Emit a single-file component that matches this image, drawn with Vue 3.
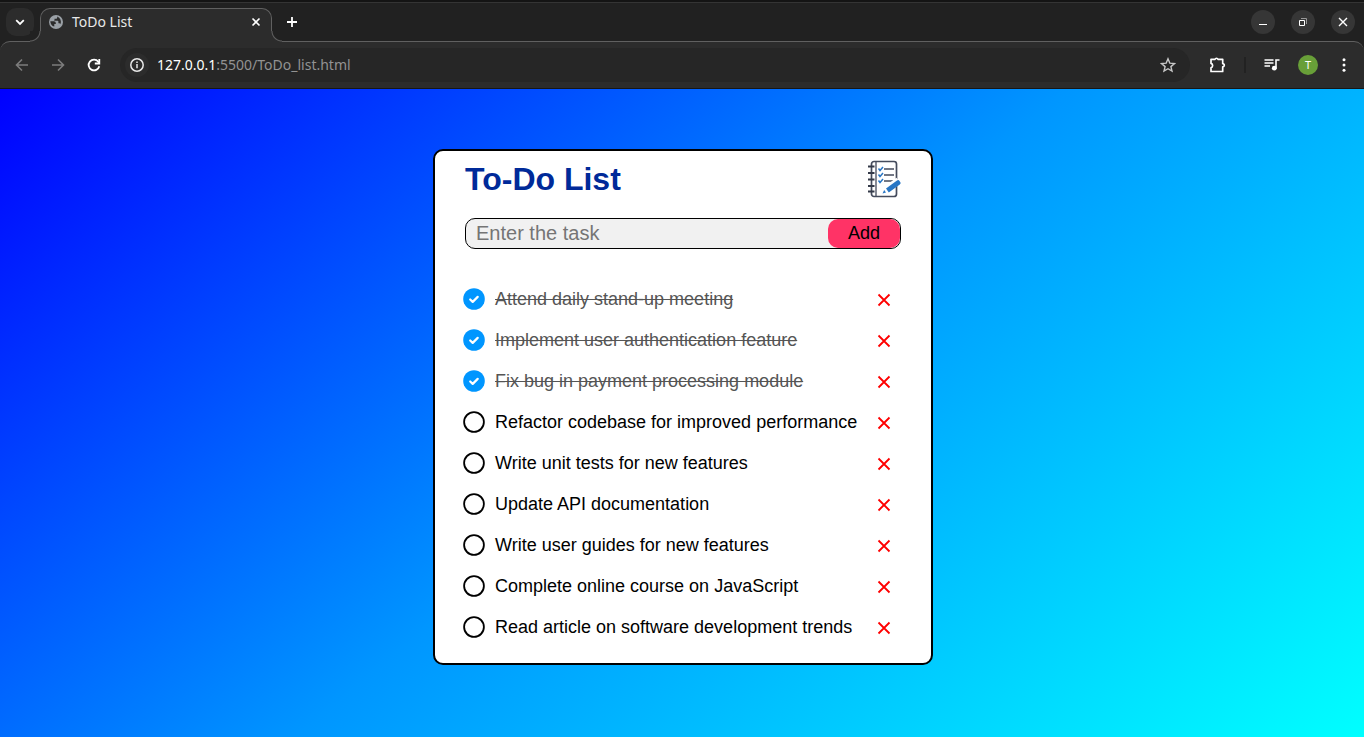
<script setup>
import { ref } from 'vue'

const draft = ref('')
const tasks = ref([
  { id: 1, text: 'Attend daily stand-up meeting', done: true },
  { id: 2, text: 'Implement user authentication feature', done: true },
  { id: 3, text: 'Fix bug in payment processing module', done: true },
  { id: 4, text: 'Refactor codebase for improved performance', done: false },
  { id: 5, text: 'Write unit tests for new features', done: false },
  { id: 6, text: 'Update API documentation', done: false },
  { id: 7, text: 'Write user guides for new features', done: false },
  { id: 8, text: 'Complete online course on JavaScript', done: false },
  { id: 9, text: 'Read article on software development trends', done: false }
])

function addTask() {
  const text = draft.value.trim()
  if (!text) return
  tasks.value.push({ id: Date.now(), text, done: false })
  draft.value = ''
}

function removeTask(id) {
  tasks.value = tasks.value.filter((t) => t.id !== id)
}
</script>

<template>
  <div class="browser">
    <header class="chrome">
      <div class="tabstrip">
        <div class="menu-cell">
          <button class="tab-menu" aria-label="Search tabs">
            <svg width="10" height="7" viewBox="0 0 10 7"><path d="M1.2 1.2 5 5l3.800-3.800" fill="none" stroke="#fff" stroke-width="1.800" /></svg>
          </button>
        </div>
        <div class="tab">
          <svg width="16" height="16" viewBox="0 0 16 16">
            <circle cx="8" cy="8" r="7" fill="#9aa0a6" />
            <path d="M2.300 7.200h3.600c1.200 0 1.900.8 1.900 1.900v.8H6.300v2.700c-2.300-.7-4-2.800-4-5.400zM9.200 2.500v.9c0 .7-.6 1.300-1.300 1.300H6.500V6c0 .4-.3.700-.7.700h3.900c.4 0 .7.300.7.700v1.900h.8c.6 0 1.100.4 1.200.9a5.600 5.600 0 0 0-3.200-7.700z" fill="#2c2c2c" />
          </svg>
          <span class="tab-title">ToDo List</span>
          <button class="plain" aria-label="Close tab">
            <svg width="10" height="10" viewBox="0 0 10 10"><path d="m1.500 1.500 7 7m0-7-7 7" stroke="#fff" stroke-width="1.600" /></svg>
          </button>
        </div>
        <button class="plain new-tab" aria-label="New tab">
          <svg width="12" height="12" viewBox="0 0 12 12"><path d="M6 1v10M1 6h10" stroke="#fff" stroke-width="1.800" /></svg>
        </button>
        <div class="window-buttons">
          <button class="round" aria-label="Minimize">
            <svg width="12" height="12" viewBox="0 0 12 12"><path d="M2 8.500h8" stroke="#fff" /></svg>
          </button>
          <button class="round" aria-label="Restore">
            <svg width="12" height="12" viewBox="0 0 12 12" fill="none"><path d="M4 2.500h5.500V8" stroke="#999" /><path d="M2.500 4.500h5v5h-5z" stroke="#fff" /></svg>
          </button>
          <button class="round" aria-label="Close">
            <svg width="12" height="12" viewBox="0 0 12 12"><path d="m2 2 8 8m0-8-8 8" stroke="#fff" stroke-width="1.400" /></svg>
          </button>
        </div>
      </div>
      <div class="toolbar">
        <nav class="nav-buttons">
          <button class="plain" aria-label="Back">
            <svg width="16" height="16" viewBox="0 0 16 16" fill="none" stroke="#7c7c7c" stroke-width="1.600"><path d="M14 8H3M8 2.500 2.500 8 8 13.500" /></svg>
          </button>
          <button class="plain" aria-label="Forward">
            <svg width="16" height="16" viewBox="0 0 16 16" fill="none" stroke="#7c7c7c" stroke-width="1.600"><path d="M2 8h11M8 2.500 13.500 8 8 13.500" /></svg>
          </button>
          <button class="plain" aria-label="Reload">
            <svg width="16" height="16" viewBox="0 0 16 16" fill="none" stroke="#fff" stroke-width="1.800"><path d="M13.300 9.300A5.400 5.400 0 1 1 12.300 4.700L13 5.600" /><path d="M13.300 2v4.500H8.800" /></svg>
          </button>
        </nav>
        <div class="omnibox">
          <span class="site-info">
            <svg width="16" height="16" viewBox="0 0 16 16"><circle cx="8" cy="8" r="6.200" fill="none" stroke="#e8e8e8" stroke-width="1.500" /><path d="M8 7v4.300M8 4.500v1.600" stroke="#e8e8e8" stroke-width="1.500" /></svg>
          </span>
          <span class="url"><span class="host">127.0.0.1</span>:5500/ToDo_list.html</span>
          <button class="plain" aria-label="Bookmark">
            <svg width="16" height="16" viewBox="0 0 16 16"><path d="m8 1.800 1.800 4.300 4.700.4-3.600 3.100 1.100 4.500L8 11.700l-4 2.400 1.100-4.500-3.600-3.100 4.700-.4z" fill="none" stroke="#c7c7c7" stroke-width="1.400" /></svg>
          </button>
        </div>
        <div class="tools">
          <button class="plain" aria-label="Extensions">
            <svg width="18" height="18" viewBox="0 0 18 18"><path d="M3 3.300h4a1.600 1.600 0 0 1 3 0h4.700v4.300a1.600 1.600 0 0 1 0 3.200v4.700H3v-3.700a2.300 2.300 0 0 0 0-4.400z" fill="none" stroke="#fff" stroke-width="1.700" stroke-linejoin="round" /></svg>
          </button>
          <span class="divider"></span>
          <button class="plain" aria-label="Media controls">
            <svg width="16" height="16" viewBox="0 0 16 16"><path d="M.5 3h9M.5 6h9M.5 9h5.500M12 11.500V3h3.500" fill="none" stroke="#fff" stroke-width="1.600" /><circle cx="10.300" cy="11.200" r="2.400" fill="#fff" /></svg>
          </button>
          <button class="avatar" aria-label="Profile">T</button>
          <button class="plain" aria-label="Menu">
            <svg width="16" height="16" viewBox="0 0 16 16" fill="#fff"><circle cx="8" cy="2.800" r="1.500" /><circle cx="8" cy="8" r="1.500" /><circle cx="8" cy="13.200" r="1.500" /></svg>
          </button>
        </div>
      </div>
    </header>

    <main class="page">
      <section class="card">
        <div class="heading">
          <h1>To-Do List</h1>
          <svg width="38" height="38" viewBox="-3 0 38 38" fill="none">
            <rect x="5.500" y="1.500" width="25" height="35" rx="2.500" stroke="#444b5c" stroke-width="1.700" />
            <path d="M10 2v34" stroke="#444b5c" stroke-width="1.300" />
            <path d="M2 6.500h6.500M2 13h6.500M2 19.500h6.500M2 26h6.500M2 31.500h6.500" stroke="#343a49" stroke-width="1.900" />
            <path d="M18 9h10M18 15h10M18 21h9" stroke="#444b5c" stroke-width="1.600" />
            <path d="m12.500 8.500 1.500 2 3-3.500M12.500 14.500l1.500 2 3-3.500M12.500 20.500l1.500 2 3-3.500" stroke="#2876c5" stroke-width="1.500" />
            <path d="m19.500 30 13-9.500" stroke="#fff" stroke-width="7" />
            <path d="m20 28.500 11-8q1.500-1 2.500.5l1 1.500q.5 1.200-.7 2l-11 8z" fill="#2876c5" />
            <path d="m18.200 30 1.800 2.500-3.500 1z" fill="#2876c5" />
          </svg>
        </div>
        <form class="entry" @submit.prevent="addTask">
          <input v-model="draft" type="text" placeholder="Enter the task" aria-label="Enter the task" />
          <button type="submit">Add</button>
        </form>
        <ul class="tasks">
          <li v-for="task in tasks" :key="task.id">
            <label :class="{ done: task.done }">
              <input v-model="task.done" type="checkbox" />
              <svg width="22" height="23" viewBox="0 0 22 23" fill="none" aria-hidden="true">
                <template v-if="task.done">
                  <circle cx="11" cy="11" r="10.800" fill="#0096ff" />
                  <path d="m7.200 11.500 2.500 2.400 5-5" stroke="#fff" stroke-width="2.200" stroke-linecap="round" stroke-linejoin="round" />
                </template>
                <circle v-else cx="11" cy="11" r="9.900" stroke="#000" stroke-width="1.800" />
              </svg>
              <span>{{ task.text }}</span>
            </label>
            <button class="remove" :aria-label="'Delete ' + task.text" @click="removeTask(task.id)">
              <svg width="14" height="14" viewBox="0 0 14 14"><path d="m1.500 1.500 11 11m0-11-11 11" stroke="#f00" stroke-width="1.800" /></svg>
            </button>
          </li>
        </ul>
      </section>
    </main>
  </div>
</template>

<style>
body {
  margin: 0;
}
</style>

<style scoped>
* {
  box-sizing: border-box;
}

button {
  padding: 0;
  border: 0;
  font: inherit;
  cursor: pointer;
}

svg {
  display: block;
  flex: none;
}

.browser {
  display: flex;
  flex-direction: column;
  min-height: 100vh;
  font-family: "Liberation Sans", Arial, sans-serif;
}

.chrome {
  background: #212121;
  border-top: 2px solid #141414;
  border-bottom: 1px solid #171717;
  font-family: "Noto Sans", sans-serif;
}

.tabstrip {
  display: flex;
  height: 39px;
  border-top: 1px solid #343434;
}

.menu-cell {
  width: 40px;
  padding: 5px 6px;
}

.tab-menu {
  display: grid;
  place-items: center;
  width: 28px;
  height: 28px;
  border-radius: 10px;
  background: #2c2c2c;
}

.tab {
  position: relative;
  display: flex;
  align-items: center;
  gap: 8px;
  width: 232px;
  margin-top: 5px;
  margin-bottom: -1px;
  padding: 0 10px 8px 7px;
  border: 1px solid #606060;
  border-bottom: 0;
  border-radius: 10px 10px 0 0;
  background: #2c2c2c;
  color: #e8e8e8;
  font-size: 14px;
}

/* Flared feet joining the tab outline to the toolbar edge */
.tab::before,
.tab::after {
  content: "";
  position: absolute;
  bottom: 0;
  width: 11px;
  height: 11px;
}

.tab::before {
  left: -11px;
  background: radial-gradient(circle at 0 0, #212121 9px, #606060 10px, #2c2c2c 11px);
}

.tab::after {
  right: -11px;
  background: radial-gradient(circle at 100% 0, #212121 9px, #606060 10px, #2c2c2c 11px);
}

.tab-title {
  flex: 1;
}

.plain {
  display: grid;
  place-items: center;
  background: none;
}

.new-tab {
  width: 40px;
}

.window-buttons {
  display: flex;
  flex: 1;
  align-items: center;
  justify-content: flex-end;
  gap: 16px;
  padding-right: 9px;
}

.round {
  display: grid;
  place-items: center;
  width: 24px;
  height: 24px;
  border-radius: 50%;
  background: #363636;
}

.toolbar {
  display: flex;
  align-items: center;
  gap: 18px;
  height: 47px;
  padding: 0 12px 0 14px;
  border-top: 1px solid #606060;
  border-radius: 10px 10px 0 0;
  background: #2c2c2c;
}

.nav-buttons {
  display: flex;
  gap: 20px;
}

.omnibox {
  display: flex;
  flex: 1;
  align-items: center;
  height: 34px;
  padding: 0 14px 0 5px;
  border-radius: 17px;
  background: #262626;
}

.site-info {
  display: grid;
  place-items: center;
  width: 24px;
  height: 24px;
  border-radius: 50%;
  background: #2c2c2c;
}

.url {
  flex: 1;
  padding-left: 8px;
  color: #929292;
  font-size: 14px;
  line-height: 18px;
}

.host {
  color: #fff;
}

.tools {
  display: flex;
  align-items: center;
  gap: 18px;
}

.divider {
  width: 2px;
  height: 16px;
  background: #222;
}

.avatar {
  width: 20px;
  height: 20px;
  border-radius: 50%;
  background: #689f38;
  color: #fff;
  font-size: 11px;
  line-height: 20px;
}

.page {
  flex: 1;
  padding: 60px 15px 60px 17px;
  background: linear-gradient(140deg, #00f, #0096ff, #0ff);
}

.card {
  width: 100%;
  max-width: 500px;
  margin: 0 auto;
  padding: 9px 30px 15px;
  border: 2px solid #000;
  border-radius: 10px;
  background: #fff;
}

.heading {
  display: flex;
  align-items: center;
  justify-content: space-between;
  height: 38px;
}

h1 {
  margin: 0;
  color: #002a99;
  font-size: 32px;
  line-height: 36px;
}

.entry {
  display: flex;
  height: 31px;
  margin-top: 20px;
  border: 1px solid #000;
  border-radius: 10px;
  background: #f1f1f1;
}

.entry input {
  flex: 1;
  min-width: 0;
  padding: 0 10px;
  border: 0;
  outline: 0;
  background: none;
  font: inherit;
  font-size: 20px;
}

.entry input::placeholder {
  color: #757575;
}

.entry button {
  width: 72px;
  border-radius: 10px;
  background: #ff3366;
  color: #000;
  font-size: 18px;
}

.tasks {
  margin: 30px 0 0;
  padding: 0;
  list-style: none;
}

li {
  display: flex;
  align-items: center;
  justify-content: space-between;
  height: 41px;
  padding-right: 10px;
}

label {
  display: flex;
  align-items: center;
  gap: 10px;
  margin-left: -2px;
  font-size: 18px;
  cursor: pointer;
}

label input {
  position: absolute;
  opacity: 0;
}

.done span {
  color: #555;
  text-decoration: line-through;
}

.remove {
  background: none;
}
</style>
